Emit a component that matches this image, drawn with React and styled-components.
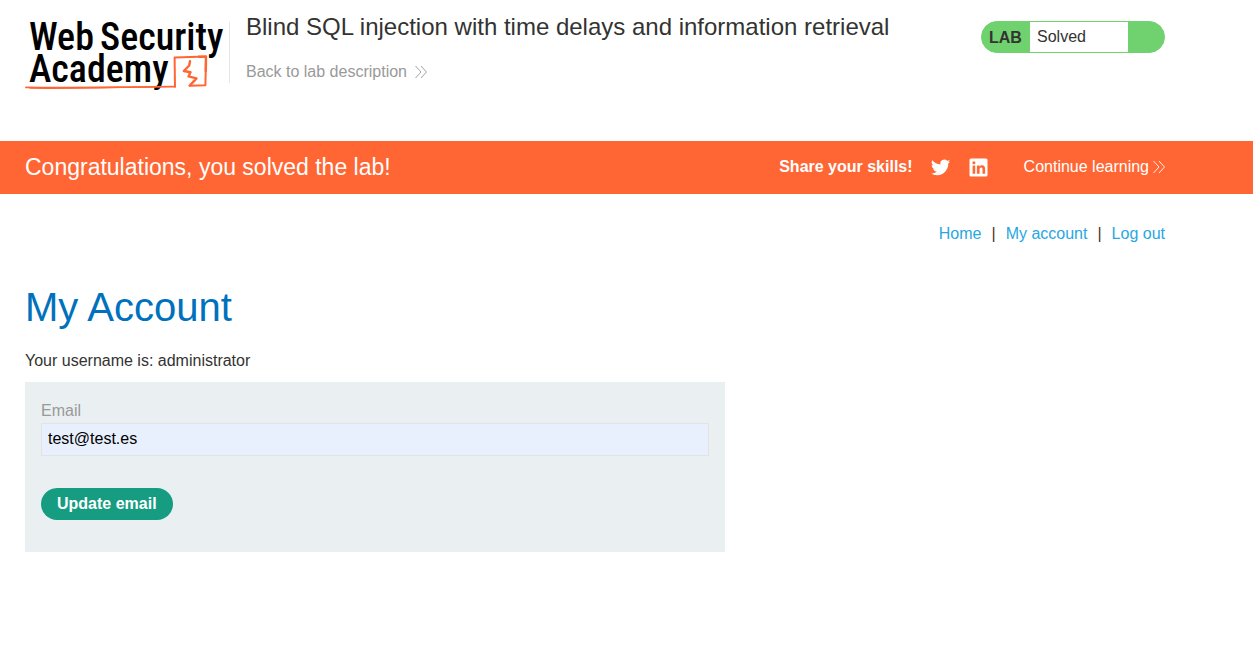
import React from "react";
import styled, { createGlobalStyle } from "styled-components";

const GlobalStyle = createGlobalStyle`
  *, *::before, *::after { box-sizing: border-box; }
  body {
    margin: 0;
    background: #fff;
    color: #333332;
    font: 16px/24px "Liberation Sans", Arial, sans-serif;
  }
  h1, h2, p { margin: 0; font-weight: 400; }
`;

const Container = styled.div`
  padding: 0 88px 0 25px;
`;

const Header = styled(Container).attrs({ as: "header" })`
  display: flex;
  align-items: flex-start;
  padding-top: 10px;
  padding-bottom: 48px;
`;

const LogoLink = styled.a`
  display: block;
  flex: none;
  padding-top: 11px;
`;

const LogoSvg = styled.svg`
  display: block;
  overflow: visible;
`;

const LogoText = styled.text`
  font-family: "Roboto Condensed", Roboto, sans-serif;
  font-size: 38px;
  font-weight: 500;
  fill: #000;
`;

const TitleBlock = styled.div`
  flex: 1;
  min-width: 0;
  margin: 12px 16px 0 4px;
  height: 61px;
  padding-left: 16px;
  border-left: 1px solid #e6e6e6;
`;

const LabTitle = styled.h2`
  margin-top: -12px;
  font-size: 24px;
  line-height: 34px;
`;

const ArrowLink = styled.a`
  display: inline-flex;
  align-items: center;
  gap: ${(p) => p.$gap}px;
  color: ${(p) => p.$color};
  text-decoration: none;
`;

const BackRow = styled.p`
  margin-top: 16px;
`;

const LabStatus = styled.div`
  display: flex;
  flex: none;
  width: 184px;
  height: 32px;
  margin-top: 11px;
  border: 1px solid #70d26e;
  border-radius: 16px;
  background: #70d26e;
  line-height: 30px;
`;

const LabTag = styled.strong`
  width: 48px;
  padding-left: 7px;
  line-height: 32px;
`;

const LabState = styled.span`
  width: 98px;
  padding-left: 7px;
  background: #fff;
`;

const Banner = styled(Container).attrs({ as: "section" })`
  display: flex;
  align-items: center;
  justify-content: space-between;
  height: 53px;
  padding-bottom: 2px;
  background: #ff6633;
  color: #fff;
`;

const BannerTitle = styled.h2`
  font-size: 23px;
  line-height: 32px;
`;

const Share = styled.div`
  display: flex;
  align-items: center;
`;

const SocialLink = styled.a`
  display: block;
  width: 20px;
  height: 20px;
  margin-left: 18px;
  color: #fff;
`;

const SocialIcon = styled.svg`
  display: block;
`;

const ContinueItem = styled.span`
  margin-left: 35px;
`;

const Nav = styled.nav`
  display: flex;
  justify-content: flex-end;
  gap: 10px;
  padding-top: 28px;
`;

const NavLink = styled.a`
  color: #29a7df;
  text-decoration: none;
`;

const NavDivider = styled.span`
  color: #4d3320;
`;

const PageTitle = styled.h1`
  margin-top: 37px;
  color: #0071bc;
  font-size: 40px;
  line-height: 48px;
`;

const Username = styled.p`
  margin-top: 18px;
`;

const Form = styled.form`
  max-width: 700px;
  margin-top: 9px;
  padding: 16px 16px 32px;
  background: #eaf0f2;
`;

const Label = styled.label`
  display: block;
  color: #999;
  line-height: 25px;
`;

const Input = styled.input`
  display: block;
  width: 100%;
  height: 33px;
  padding: 0 6px 2px;
  border: 1px solid #e3e3e6;
  border-radius: 0;
  outline: 0;
  background: #e8f0fe;
  color: #000;
  font: inherit;
`;

const Button = styled.button`
  display: block;
  height: 32px;
  margin-top: 32px;
  padding: 0 16px;
  border: 0;
  border-radius: 16px;
  background: #169c80;
  color: #fff;
  font: inherit;
  font-weight: 700;
  cursor: pointer;
`;

function Chevrons() {
  return (
    <svg width="12" height="14" viewBox="0 0 12 14" fill="none" stroke="currentColor" strokeWidth="0.9" aria-hidden="true">
      <path d="M0.5 1 6 7 0.5 13M6 1 11.5 7 6 13" />
    </svg>
  );
}

function Logo() {
  return (
    <LogoSvg width="200" height="72" viewBox="0 0 200 72" role="img" aria-label="Web Security Academy">
      <LogoText x="4" y="29">Web</LogoText>
      <LogoText x="75" y="29">Security</LogoText>
      <LogoText x="4" y="61">Academy</LogoText>
      <g fill="none" stroke="#ff6633" strokeLinecap="round" strokeLinejoin="round">
        <path d="M150 65.8 149.6 36.6 181 35.6 180.4 64.3 164.5 64.8" strokeWidth="2" />
        <path d="M174 35.8 181 35.6 180.8 50" strokeWidth="2.4" />
        <path d="M1 66.4C50 67.2 95 65.8 150 65.6" strokeWidth="1.8" />
        <path d="M5 67.2C50 67.8 90 66.6 130 65.8" strokeWidth="1.2" />
        <path d="M165 40.2 164.2 44.5 158.8 50 165.5 51.2 163.5 55.4 171.5 57.4 165 64.4" strokeWidth="2.4" />
      </g>
    </LogoSvg>
  );
}

export default function App() {
  return (
    <>
      <GlobalStyle />
      <Header>
        <LogoLink href="#academy"><Logo /></LogoLink>
        <TitleBlock>
          <LabTitle>Blind SQL injection with time delays and information retrieval</LabTitle>
          <BackRow>
            <ArrowLink href="#description" $color="#999" $gap={8}>
              Back to lab description <Chevrons />
            </ArrowLink>
          </BackRow>
        </TitleBlock>
        <LabStatus>
          <LabTag>LAB</LabTag>
          <LabState>Solved</LabState>
        </LabStatus>
      </Header>
      <Banner>
        <BannerTitle>Congratulations, you solved the lab!</BannerTitle>
        <Share>
          <strong>Share your skills!</strong>
          <SocialLink href="#twitter" aria-label="Share on Twitter">
            <SocialIcon width="20" height="20" viewBox="0 -1 25 25" fill="currentColor" aria-hidden="true">
              <path d="M23.95 4.57a10 10 0 0 1-2.82.77 4.96 4.96 0 0 0 2.16-2.72c-.95.55-2 .95-3.13 1.18a4.92 4.92 0 0 0-8.38 4.48A13.93 13.93 0 0 1 1.64 3.16a4.92 4.92 0 0 0 1.52 6.57 4.9 4.9 0 0 1-2.23-.61v.06a4.92 4.92 0 0 0 3.95 4.83 5 5 0 0 1-2.21.08 4.94 4.94 0 0 0 4.6 3.42A9.87 9.87 0 0 1 0 19.54a14 14 0 0 0 7.55 2.21c9.05 0 14-7.5 14-13.98 0-.21 0-.42-.02-.63a9.94 9.94 0 0 0 2.42-2.57z" />
            </SocialIcon>
          </SocialLink>
          <SocialLink href="#linkedin" aria-label="Share on LinkedIn">
            <SocialIcon width="20" height="20" viewBox="0 0 20 20" aria-hidden="true">
              <rect x="0.5" y="1.5" width="18" height="18" rx="1.5" fill="currentColor" />
              <g fill="#ff6633">
                <circle cx="4.9" cy="5.7" r="1.5" />
                <path d="M3.6 8.5h2.6v8.3H3.6zM7.9 8.5h2.5v1.2c.5-.8 1.4-1.4 2.6-1.4 2.6 0 3.1 1.7 3.1 4v4.5h-2.6v-4c0-1 0-2.2-1.3-2.2-1.4 0-1.6 1-1.6 2.1v4.1H7.9z" />
              </g>
            </SocialIcon>
          </SocialLink>
          <ContinueItem>
            <ArrowLink href="#continue" $color="#fff" $gap={4}>
              Continue learning <Chevrons />
            </ArrowLink>
          </ContinueItem>
        </Share>
      </Banner>
      <Container as="main">
        <Nav>
          <NavLink href="#home">Home</NavLink>
          <NavDivider>|</NavDivider>
          <NavLink href="#account">My account</NavLink>
          <NavDivider>|</NavDivider>
          <NavLink href="#logout">Log out</NavLink>
        </Nav>
        <PageTitle>My Account</PageTitle>
        <Username>Your username is: administrator</Username>
        <Form onSubmit={(e) => e.preventDefault()}>
          <Label htmlFor="email">Email</Label>
          <Input id="email" type="email" defaultValue="test@test.es" />
          <Button type="submit">Update email</Button>
        </Form>
      </Container>
    </>
  );
}
